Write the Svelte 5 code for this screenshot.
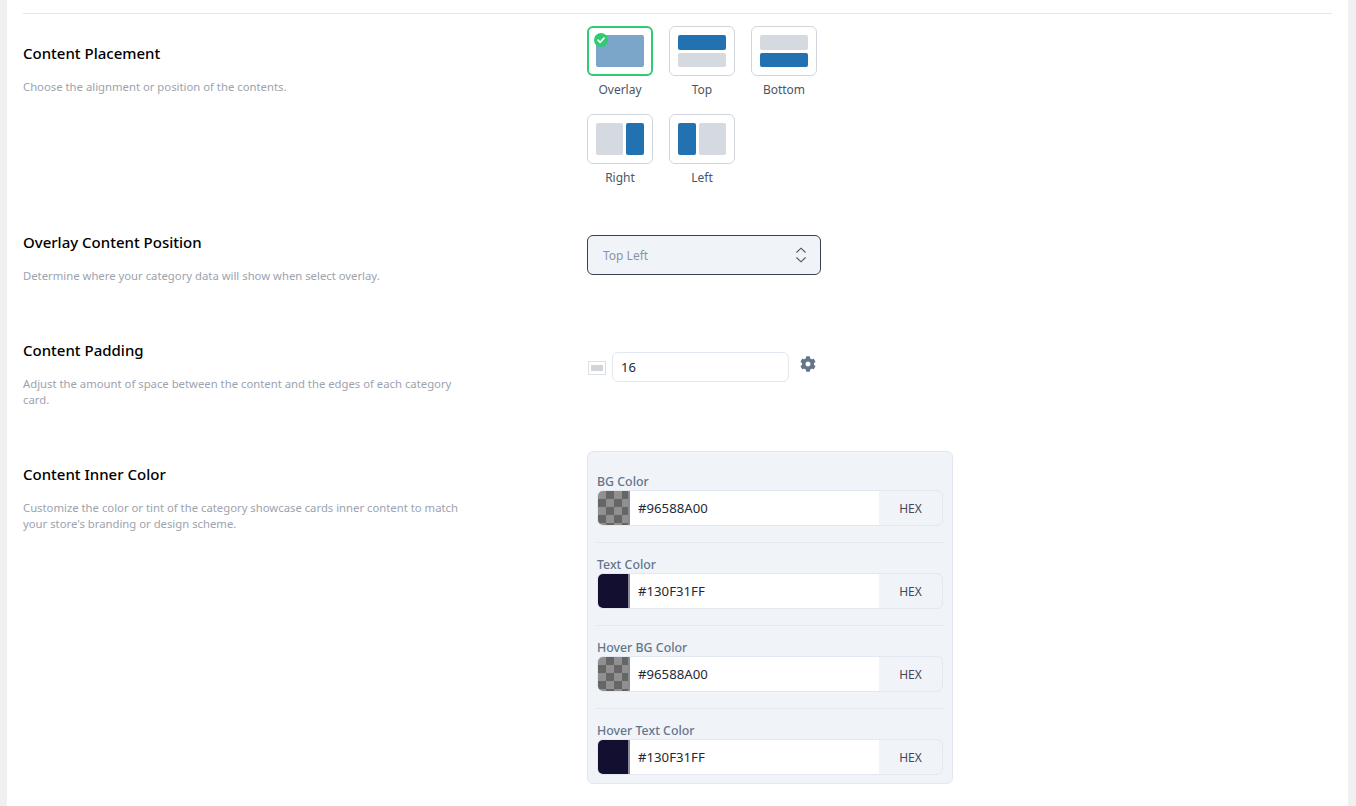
<script>
  const placements = [
    { name: 'Overlay', kind: 'overlay', active: true },
    { name: 'Top', kind: 'top' },
    { name: 'Bottom', kind: 'bottom' },
    { name: 'Right', kind: 'right' },
    { name: 'Left', kind: 'left' }
  ];
  const colors = [
    { label: 'BG Color', value: '#96588A00', clear: true },
    { label: 'Text Color', value: '#130F31FF', clear: false },
    { label: 'Hover BG Color', value: '#96588A00', clear: true },
    { label: 'Hover Text Color', value: '#130F31FF', clear: false }
  ];
</script>

<main class="page">
  <div class="sheet">
    <section class="row r1">
      <div class="info">
        <h3>Content Placement</h3>
        <p>Choose the alignment or position of the contents.</p>
      </div>
      <div class="control">
        <div class="options">
          {#each placements as p}
            <div class="option">
              <div class="card" class:active={p.active}>
                {#if p.active}
                  <svg class="badge" viewBox="0 0 14 14" aria-hidden="true">
                    <circle cx="7" cy="7" r="7" fill="#2ecc71" />
                    <path d="M4 7.2l2.1 2.1L10 5.2" fill="none" stroke="#fff" stroke-width="1.8" stroke-linecap="round" stroke-linejoin="round" />
                  </svg>
                {/if}
                <div class="art {p.kind}">
                  {#if p.kind === 'overlay'}
                    <span class="blue"></span>
                  {:else if p.kind === 'top' || p.kind === 'left'}
                    <span class="blue"></span><span class="grey"></span>
                  {:else}
                    <span class="grey"></span><span class="blue"></span>
                  {/if}
                </div>
              </div>
              <span class="option-name">{p.name}</span>
            </div>
          {/each}
        </div>
      </div>
    </section>

    <section class="row r2">
      <div class="info">
        <h3>Overlay Content Position</h3>
        <p>Determine where your category data will show when select overlay.</p>
      </div>
      <div class="control">
        <div class="select">
          <span>Top Left</span>
          <svg viewBox="0 0 12 16" width="12" height="16" aria-hidden="true">
            <path d="M1.5 5.5L6 1.2l4.500 4.300M1.500 10.500L6 14.800l4.500-4.300" fill="none" stroke="#4b5563" stroke-width="1.100" />
          </svg>
        </div>
      </div>
    </section>

    <section class="row r3">
      <div class="info">
        <h3>Content Padding</h3>
        <p>Adjust the amount of space between the content and the edges of each category card.</p>
      </div>
      <div class="control">
        <div class="padding">
          <span class="box-icon"><i></i></span>
          <div class="num">16</div>
          <svg class="gear" viewBox="0 0 512 512" width="16" height="16" aria-hidden="true">
            <path fill="#64748b" d="M487.400 315.700l-42.600-24.600c4.300-23.200 4.300-47 0-70.200l42.600-24.600c4.900-2.800 7.100-8.600 5.500-14-11.100-35.600-30-67.800-54.700-94.600-3.800-4.100-10-5.100-14.800-2.300L380.800 110c-17.900-15.400-38.500-27.300-60.800-35.100V25.800c0-5.600-3.900-10.500-9.400-11.700-36.700-8.200-74.300-7.800-109.200 0-5.500 1.200-9.400 6.100-9.400 11.700V75c-22.200 7.900-42.800 19.800-60.800 35.100L88.700 85.500c-4.900-2.800-11-1.900-14.800 2.300-24.700 26.700-43.600 58.900-54.700 94.600-1.700 5.400.6 11.200 5.500 14L67.300 221c-4.300 23.200-4.300 47 0 70.200l-42.600 24.600c-4.900 2.800-7.100 8.600-5.500 14 11.100 35.600 30 67.800 54.700 94.600 3.800 4.100 10 5.100 14.800 2.300l42.600-24.600c17.900 15.400 38.500 27.300 60.800 35.100v49.200c0 5.600 3.900 10.500 9.400 11.700 36.700 8.200 74.300 7.800 109.200 0 5.500-1.200 9.400-6.100 9.400-11.700v-49.200c22.200-7.900 42.800-19.800 60.800-35.100l42.600 24.600c4.900 2.800 11 1.900 14.800-2.300 24.700-26.700 43.600-58.900 54.700-94.600 1.500-5.500-.7-11.300-5.600-14.100zM256 336c-44.100 0-80-35.900-80-80s35.900-80 80-80 80 35.900 80 80-35.900 80-80 80z" />
          </svg>
        </div>
      </div>
    </section>

    <section class="row r4">
      <div class="info">
        <h3>Content Inner Color</h3>
        <p>Customize the color or tint of the category showcase cards inner content to match your store's branding or design scheme.</p>
      </div>
      <div class="control">
        <div class="panel">
          {#each colors as c, i}
            <div class="color" class:first={i === 0}>
              <label for={'c' + i}>{c.label}</label>
              <div class="field">
                <span class="swatch" class:clear={c.clear}></span>
                <input id={'c' + i} value={c.value} readonly />
                <span class="hex">HEX</span>
              </div>
            </div>
          {/each}
        </div>
      </div>
    </section>
  </div>
</main>

<style>
  :global(body) {
    margin: 0;
    background: #f0f0f1;
    font-family: "Noto Sans", "Open Sans", sans-serif;
  }
  .page {
    height: 806px;
    overflow: hidden;
    padding: 0 8px 0 7px;
    box-sizing: border-box;
  }
  .sheet {
    height: 100%;
    background: #fff;
    padding: 13px 16px 0;
    box-sizing: border-box;
  }
  .row {
    display: grid;
    grid-template-columns: 564px 1fr;
  }
  .r1 {
    border-top: 1px solid #e5e5ee;
    height: 209px;
  }
  .r2 { height: 108px; }
  .r3 { height: 124px; }
  .r1 .info { padding-top: 30px; }
  .r1 .control { padding-top: 12px; }
  .r2 .info { padding-top: 10px; }
  .r2 .control { padding-top: 12px; }
  .r3 .info { padding-top: 10px; }
  .r3 .control { padding-top: 21px; }
  .r4 .info { padding-top: 10px; }
  .r4 .control { margin-top: -4px; }
  h3 {
    margin: 0;
    font-size: 15px;
    line-height: 19px;
    font-weight: 500;
    color: #000;
  }
  p {
    margin: 16px 0 0;
    width: 440px;
    font-size: 11.3px;
    line-height: 16px;
    color: #9ca3af;
  }
  .options {
    display: grid;
    grid-template-columns: repeat(3, 66px);
    column-gap: 16px;
    row-gap: 15px;
  }
  .option {
    display: flex;
    flex-direction: column;
    align-items: center;
    gap: 5px;
  }
  .card {
    position: relative;
    width: 66px;
    height: 50px;
    box-sizing: border-box;
    border: 1px solid #d1d5db;
    border-radius: 6px;
    padding: 8px;
    background: #fff;
  }
  .card.active {
    border: 2px solid #2ecc71;
    padding: 7px;
  }
  .badge {
    position: absolute;
    left: 5px;
    top: 5px;
    width: 14px;
    height: 14px;
  }
  .art {
    display: flex;
    gap: 3px;
    height: 32px;
  }
  .top, .bottom { flex-direction: column; }
  .art span { border-radius: 2px; flex: 1; }
  .blue { background: #2271b1; }
  .grey { background: #d5d9e0; }
  .overlay .blue { background: #7ba5c9; }
  .right .blue, .left .blue { flex: 0 0 18px; }
  .option-name {
    font-size: 12px;
    line-height: 18px;
    color: #4b5563;
  }
  .select {
    width: 234px;
    height: 40px;
    box-sizing: border-box;
    border: 1px solid #374151;
    border-radius: 6px;
    background: #f0f4f9;
    padding: 0 13px 0 15px;
    display: flex;
    align-items: center;
    justify-content: space-between;
    font-size: 12px;
    color: #8a94a6;
  }
  .padding {
    display: flex;
    align-items: flex-start;
  }
  .box-icon {
    width: 18px;
    height: 14px;
    box-sizing: border-box;
    border: 1px solid #dcdfe4;
    margin: 9px 6px 0 1px;
    display: flex;
    align-items: center;
    justify-content: center;
  }
  .box-icon i {
    width: 12px;
    height: 6px;
    background: #d1d5db;
  }
  .num {
    width: 177px;
    height: 30px;
    box-sizing: border-box;
    border: 1px solid #e2e8f0;
    border-radius: 6px;
    padding-left: 8px;
    font-size: 13px;
    line-height: 28px;
    color: #1f2937;
  }
  .gear { margin: 4px 0 0 11px; }
  .panel {
    width: 366px;
    height: 333px;
    box-sizing: border-box;
    background: #f0f4f9;
    border: 1px solid #e2e8f0;
    border-radius: 6px;
    padding: 0 8px;
  }
  .color {
    height: 83px;
    box-sizing: border-box;
    padding-top: 13px;
    border-top: 1px solid #e2e8f0;
  }
  .color.first {
    height: 90px;
    padding-top: 21px;
    border-top: 0;
  }
  label {
    display: block;
    font-size: 12.35px;
    line-height: 17px;
    padding-left: 1px;
    font-weight: 500;
    color: #64748b;
  }
  .field {
    margin: 0 1px;
    height: 36px;
    box-sizing: border-box;
    border: 1px solid #e2e8f0;
    border-radius: 6px;
    display: flex;
    overflow: hidden;
    background: #f0f4f9;
  }
  .swatch {
    flex: 0 0 30px;
    background: #130f31;
    border-right: 2px solid #8b8b96;
  }
  .swatch.clear {
    background: repeating-conic-gradient(#666 0 25%, #909090 0 50%) 0 0 / 16px 16px;
  }
  input {
    flex: 0 0 249px;
    width: 249px;
    box-sizing: border-box;
    border: 0;
    outline: 0;
    background: #fff;
    padding: 0 0 0 8px;
    font: 13.2px "Noto Sans", "Open Sans", sans-serif;
    color: #1f2937;
  }
  .hex {
    flex: 1;
    text-align: center;
    font-size: 12px;
    line-height: 36px;
    color: #4a4458;
  }
</style>
